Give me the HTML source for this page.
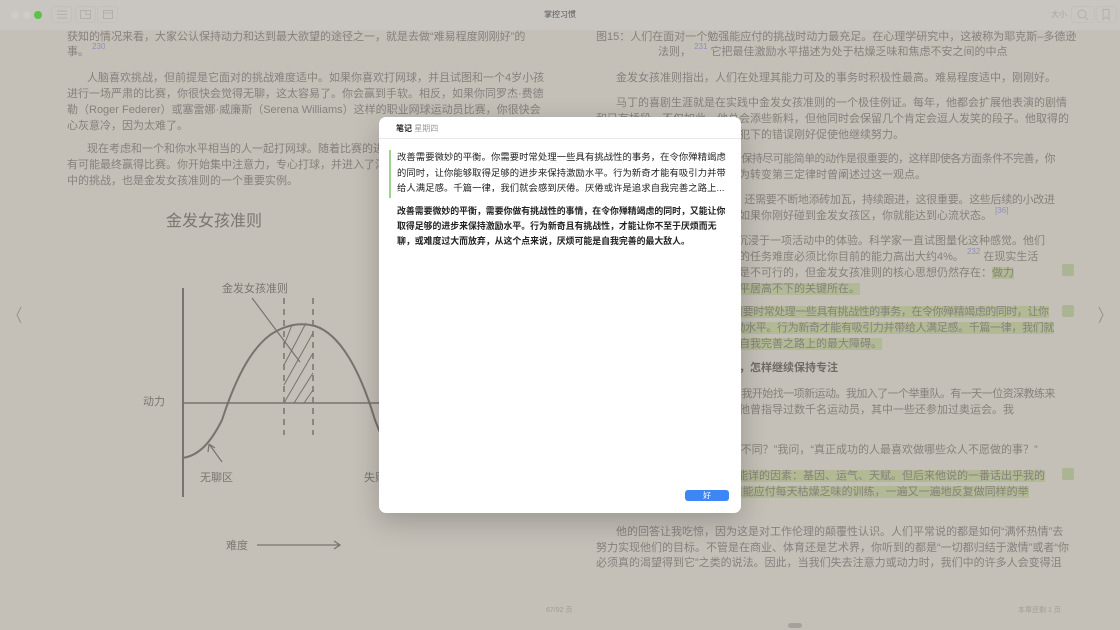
<!DOCTYPE html>
<html><head><meta charset="utf-8"><style>
*{margin:0;padding:0;box-sizing:border-box}
body{width:1120px;height:630px;overflow:hidden;background:#c4c0b8;font-family:"Liberation Sans","Noto Sans CJK SC",sans-serif;position:relative;color:#86817b}
.tb{position:absolute;left:0;top:0;width:1120px;height:30px;background:#c9c6c1}
.l{position:absolute;white-space:nowrap;font-size:11px;line-height:16px}
.t{letter-spacing:-0.55px}
.sup{font-size:8px;color:#8f8dc0;vertical-align:6px;line-height:0}
.hl{background:#b1b995}
.sq{position:absolute;width:12px;height:12px;background:#abb493;border-radius:2px}
.dlg{position:absolute;left:379px;top:117px;width:362px;height:396px;background:#fff;border-radius:7px;box-shadow:0 8px 28px rgba(0,0,0,.22)}
.d{position:absolute;white-space:nowrap;font-size:9.3px;line-height:12px;color:#222;font-weight:bold}
</style></head><body>
<div class="tb"></div>
<div style="position:absolute;left:11px;top:11px;width:8px;height:8px;border-radius:50%;background:#cfccc7"></div>
<div style="position:absolute;left:23px;top:11px;width:8px;height:8px;border-radius:50%;background:#cfccc7"></div>
<div style="position:absolute;left:34px;top:11px;width:8px;height:8px;border-radius:50%;background:#5bc347"></div>
<svg style="position:absolute;left:0;top:0" width="1120" height="30" fill="none" stroke="#b3b0ab" stroke-width="1">
<rect x="51.5" y="6.5" width="20" height="16" rx="3" stroke="#c3c0bb"/><path d="M57 11h10M57 14.5h10M57 18h10"/>
<rect x="75.5" y="6.5" width="20" height="16" rx="3" stroke="#c3c0bb"/><rect x="80.5" y="10.5" width="10" height="8"/><path d="M86 10.5v4h4"/>
<rect x="97.5" y="6.5" width="20" height="16" rx="3" stroke="#c3c0bb"/><rect x="103.5" y="10.5" width="9" height="8"/><path d="M103.5 13h9"/>
<rect x="1071.5" y="6.5" width="23" height="16" rx="3" stroke="#c3c0bb"/><circle cx="1082" cy="14" r="4"/><path d="M1085 17l3 3"/>
<rect x="1096.5" y="6.5" width="20" height="16" rx="3" stroke="#c3c0bb"/><path d="M1103 9.5h6v10l-3-2.5-3 2.5z"/>
</svg>
<div class="l" style="left:544px;top:7px;font-size:8px;color:#555">掌控习惯</div>
<div class="l" style="left:1051px;top:7px;font-size:8px;color:#a9a6a1">大小</div>

<div class="l" style="left:67px;top:29px">获知的情况来看，大家公认保持动力和达到最大欲望的途径之一，就是去做“难易程度刚刚好”的</div>
<div class="l" style="left:67px;top:44px">事。 <span class="sup">230</span></div>
<div class="l" style="left:87px;top:70px">人脑喜欢挑战，但前提是它面对的挑战难度适中。如果你喜欢打网球，并且试图和一个4岁小孩</div>
<div class="l" style="left:67px;top:86px">进行一场严肃的比赛，你很快会觉得无聊，这太容易了。你会赢到手软。相反，如果你同罗杰·费德</div>
<div class="l" style="left:67px;top:102px">勒（Roger Federer）或塞雷娜·威廉斯（Serena Williams）这样的职业网球运动员比赛，你很快会</div>
<div class="l" style="left:67px;top:118px">心灰意冷，因为太难了。</div>
<div class="l" style="left:87px;top:141px">现在考虑和一个和你水平相当的人一起打网球。随着比赛的进行，你会赢几分，也会输几分。你</div>
<div class="l" style="left:67px;top:157px">有可能最终赢得比赛。你开始集中注意力，专心打球，并进入了浑然忘我的状态。这是一个难度适</div>
<div class="l" style="left:67px;top:173px">中的挑战，也是金发女孩准则的一个重要实例。</div>

<svg style="position:absolute;left:0;top:0" width="560" height="630" fill="none" stroke="#77736e" stroke-width="2">
<text x="166" y="226" font-size="16" fill="#7a7671" stroke="none" font-family="Noto Sans CJK SC">金发女孩准则</text>
<text x="222" y="292" font-size="11" fill="#7a7671" stroke="none" font-family="Noto Sans CJK SC">金发女孩准则</text>
<text x="143" y="405" font-size="11" fill="#7a7671" stroke="none" font-family="Noto Sans CJK SC">动力</text>
<text x="200" y="481" font-size="11" fill="#7a7671" stroke="none" font-family="Noto Sans CJK SC">无聊区</text>
<text x="364" y="481" font-size="11" fill="#7a7671" stroke="none" font-family="Noto Sans CJK SC">失败区</text>
<text x="226" y="549" font-size="11" fill="#7a7671" stroke="none" font-family="Noto Sans CJK SC">难度</text>
<path d="M183 288V497"/>
<path d="M183 403H390" stroke-width="1.5"/>
<path d="M182 458C200 456 212 440 222 420C235 380 250 350 270 335C285 325 300 322 315 326C340 334 360 370 375 420L385 445"/>
<path d="M284 298V435M313 298V435" stroke-width="1.5" stroke-dasharray="6 5"/>
<path d="M284 345L292 325M284 365L306 323M284 385L313 333M284 403L313 353M294 403L313 373M304 403L313 390" stroke-width="1"/>
<path d="M252 298L300 362" stroke-width="1.2"/>
<path d="M222 462L209 444M209 444L208 452M209 444L215 448" stroke-width="1.2"/>
<path d="M257 545H340M334 541L340 545L334 549" stroke-width="1.3"/>
</svg>

<div class="l" style="left:596px;top:29px">图15：人们在面对一个勉强能应付的挑战时动力最充足。在心理学研究中，这被称为耶克斯–多德逊</div>
<div class="l" style="left:658px;top:44px">法则， <span class="sup">231</span> 它把最佳激励水平描述为处于枯燥乏味和焦虑不安之间的中点</div>
<div class="l" style="left:616px;top:70px">金发女孩准则指出，人们在处理其能力可及的事务时积极性最高。难易程度适中，刚刚好。</div>
<div class="l" style="left:616px;top:95px">马丁的喜剧生涯就是在实践中金发女孩准则的一个极佳例证。每年，他都会扩展他表演的剧情</div>
<div class="l" style="left:596px;top:111px">和已有桥段，不仅如此，他总会添些新料，但他同时会保留几个肯定会逗人发笑的段子。他取得的</div>
<div class="l" style="left:596px;top:127px">胜利足以让他保持动力，而他犯下的错误刚好促使他继续努力。</div>
<div class="l t" style="left:616px;top:151px">对于开始一个新习惯来说，保持尽可能简单的动作是很重要的，这样即使各方面条件不完善，你</div>
<div class="l" style="left:596px;top:167px">也能坚持下去。我们在讨论行为转变第三定律时曾阐述过这一观点。</div>
<div class="l" style="left:616px;top:192px;letter-spacing:-0.3px">然而，一旦习惯建立起来，还需要不断地添砖加瓦，持续跟进，这很重要。这些后续的小改进</div>
<div class="l" style="left:596px;top:208px">和新挑战会让你保持积极性。如果你刚好碰到金发女孩区，你就能达到心流状态。 <span class="sup">[36]</span></div>
<div class="l" style="left:616px;top:233px">心流状态是指一个人完全沉浸于一项活动中的体验。科学家一直试图量化这种感觉。他们</div>
<div class="l" style="left:596px;top:249px">发现，要进入心流状态，完成的任务难度必须比你目前的能力高出大约4%。 <span class="sup">232</span> 在现实生活</div>
<div class="l" style="left:596px;top:265px">中，如此精确地衡量难度通常是不可行的，但金发女孩准则的核心思想仍然存在：<span class="hl">做力</span></div>
<div class="l" style="left:596px;top:281px">所能及的挑战，是<span class="hl">保持激励水平居高不下的关键所在。</span></div>
<div class="l" style="left:616px;top:304px;letter-spacing:-0.45px"><span class="hl">改善需要微妙的平衡。你需要时常处理一些具有挑战性的事务，在令你殚精竭虑的同时，让你</span></div>
<div class="l" style="left:596px;top:320px;letter-spacing:-0.35px"><span class="hl">能够取得足够的进步来保持激励水平。行为新奇才能有吸引力并带给人满足感。千篇一律，我们就</span></div>
<div class="l" style="left:596px;top:336px"><span class="hl">会感到厌倦。厌倦或许是追求自我完善之路上的最大障碍。</span></div>
<div class="l" style="left:596px;top:360px;font-weight:bold;color:#6e6a65">当你厌倦了自己的奋斗目标时，怎样继续保持专注</div>
<div class="l t" style="left:616px;top:386px">在我的棒球生涯结束之后，我开始找一项新运动。我加入了一个举重队。有一天一位资深教练来</div>
<div class="l" style="left:596px;top:402px">访。在他漫长的职业生涯中，他曾指导过数千名运动员，其中一些还参加过奥运会。我</div>
<div class="l" style="left:596px;top:417px">们开始讨论改进的过程。</div>
<div class="l" style="left:616px;top:442px">“最优秀的人与众人有什么不同？”我问，“真正成功的人最喜欢做哪些众人不愿做的事？”</div>
<div class="l" style="left:616px;top:468px"><span class="hl">他提到了一些你可能耳熟能详的因素：基因、运气、天赋。但后来他说的一番话出乎我的</span></div>
<div class="l" style="left:596px;top:484px"><span class="hl">意料：“到头来，成败取决于谁能应付每天枯燥乏味的训练，一遍又一遍地反复做同样的举</span></div>
<div class="l" style="left:616px;top:524px">他的回答让我吃惊，因为这是对工作伦理的颠覆性认识。人们平常说的都是如何“满怀热情”去</div>
<div class="l" style="left:596px;top:540px">努力实现他们的目标。不管是在商业、体育还是艺术界，你听到的都是“一切都归结于激情”或者“你</div>
<div class="l" style="left:596px;top:555px">必须真的渴望得到它”之类的说法。因此，当我们失去注意力或动力时，我们中的许多人会变得沮</div>
<div class="sq" style="left:1062px;top:264px"></div>
<div class="sq" style="left:1062px;top:305px"></div>
<div class="sq" style="left:1062px;top:468px"></div>
<div class="l" style="left:546px;top:603px;font-size:7px;color:#a09c96">67/92 页</div>
<div class="l" style="left:1018px;top:603px;font-size:7px;color:#a09c96">本章还剩 1 页</div>
<div style="position:absolute;left:788px;top:623px;width:14px;height:5px;border-radius:3px;background:#a5a29c"></div>
<svg style="position:absolute;left:0;top:0" width="1120" height="630" fill="none" stroke="#9a968f" stroke-width="1.1">
<path d="M21 307L17 315L21 323"/><path d="M1099 307L1103 315L1099 323"/>
</svg>

<div class="dlg">
<div class="d" style="left:17px;top:6px;font-size:8px">笔记 <span style="font-weight:normal;color:#999">星期四</span></div>
<div style="position:absolute;left:0;top:21px;width:362px;height:1px;background:#e8e8e8"></div>
<div style="position:absolute;left:10px;top:33px;width:2px;height:48px;background:#9fd48e"></div>
<div class="d" style="left:18px;top:34px;font-weight:normal;letter-spacing:0.1px">改善需要微妙的平衡。你需要时常处理一些具有挑战性的事务，在令你殚精竭虑</div>
<div class="d" style="left:18px;top:50px;font-weight:normal;letter-spacing:0.1px">的同时，让你能够取得足够的进步来保持激励水平。行为新奇才能有吸引力并带</div>
<div class="d" style="left:18px;top:65px;font-weight:normal;letter-spacing:0.1px">给人满足感。千篇一律，我们就会感到厌倦。厌倦或许是追求自我完善之路上...</div>
<div class="d" style="left:18px;top:88px;font-size:8.9px">改善需要微妙的平衡，需要你做有挑战性的事情，在令你殚精竭虑的同时，又能让你</div>
<div class="d" style="left:18px;top:103px;font-size:8.9px">取得足够的进步来保持激励水平。行为新奇且有挑战性，才能让你不至于厌烦而无</div>
<div class="d" style="left:18px;top:118px;font-size:8.9px">聊，或难度过大而放弃，从这个点来说，厌烦可能是自我完善的最大敌人。</div>
<div style="position:absolute;left:306px;top:373px;width:44px;height:11px;border-radius:3px;background:#3d86f5;color:#fff;font-size:8px;line-height:11px;text-align:center">好</div>
</div>
</body></html>
